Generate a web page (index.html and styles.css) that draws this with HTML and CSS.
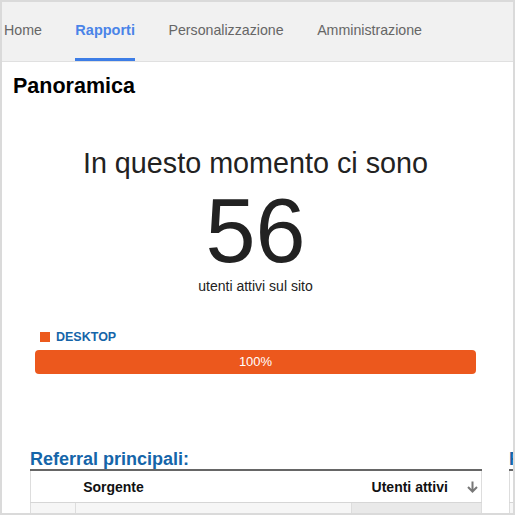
FILE: index.html
```html
<!DOCTYPE html>
<html lang="it">
<head>
<meta charset="utf-8">
<title>Panoramica</title>
<link rel="stylesheet" href="styles.css">
</head>
<body>
<div class="frame">
  <nav class="tabs">
    <a class="tab">Home</a>
    <a class="tab active">Rapporti</a>
    <a class="tab">Personalizzazione</a>
    <a class="tab">Amministrazione</a>
  </nav>
  <main class="page">
    <h1 class="title">Panoramica</h1>
    <section class="summary">
      <div class="lead">In questo momento ci sono</div>
      <div class="count">56</div>
      <div class="sub">utenti attivi sul sito</div>
      <div class="legend"><span class="swatch"></span><span class="legend-label">DESKTOP</span></div>
      <div class="bar"><div class="bar-fill" style="width:100%">100%</div></div>
    </section>
    <section class="panels">
      <div class="panel">
        <h2 class="panel-title">Referral principali:</h2>
        <table class="grid">
          <thead>
            <tr><th class="c1"></th><th class="c2">Sorgente</th><th class="c3"><span>Utenti attivi</span><svg class="sort" width="11" height="12" viewBox="0 0 11 12"><path d="M5.5 0.5V10.5M1 6L5.5 10.5L10 6" fill="none" stroke="#777" stroke-width="2"/></svg></th></tr>
          </thead>
          <tbody>
            <tr><td class="c1"></td><td class="c2"></td><td class="c3"></td></tr>
          </tbody>
        </table>
      </div>
      <div class="panel">
        <h2 class="panel-title">Pagine attive principali:</h2>
        <table class="grid">
          <thead>
            <tr><th class="c1"></th><th class="c2">Pagina attiva</th><th class="c3"><span>Utenti attivi</span></th></tr>
          </thead>
          <tbody>
            <tr><td class="c1"></td><td class="c2"></td><td class="c3"></td></tr>
          </tbody>
        </table>
      </div>
    </section>
  </main>
</div>
</body>
</html>
```
FILE: styles.css
```css
html, body {
  margin: 0;
  padding: 0;
  background: #ffffff;
}
body {
  font-family: "Liberation Sans", Arial, sans-serif;
  color: #222222;
}
.frame {
  width: 515px;
  height: 515px;
  box-sizing: border-box;
  border: 2px solid #dadada;
  overflow: hidden;
  background: #ffffff;
}
.tabs {
  display: flex;
  gap: 33.5px;
  height: 59px;
  padding-left: 2px;
  background: #f1f1f1;
  border-bottom: 1px solid #e0e0e0;
}
.tab {
  display: block;
  height: 59px;
  box-sizing: border-box;
  line-height: 56px;
  font-size: 14.2px;
  color: #666666;
  border-bottom: 3px solid transparent;
  white-space: nowrap;
}
.tab.active {
  color: #4a84e8;
  font-size: 14.5px;
  font-weight: bold;
  border-bottom-color: #3d7de6;
}
.page {
  padding-top: 12px;
}
.title {
  margin: 0 0 0 11px;
  font-size: 21.5px;
  line-height: 24px;
  font-weight: bold;
  color: #000000;
}
.summary {
  margin: 49px 37px 0 33px;
  text-align: center;
}
.lead {
  font-size: 28.75px;
  line-height: 32px;
  color: #222222;
}
.count {
  margin-top: 12px;
  font-size: 90px;
  line-height: 80px;
  color: #222222;
}
.sub {
  margin-top: 7px;
  font-size: 14px;
  line-height: 16px;
  color: #222222;
}
.legend {
  display: flex;
  align-items: center;
  gap: 6px;
  margin-top: 36px;
  padding-left: 5px;
  height: 14px;
}
.swatch {
  width: 10px;
  height: 10px;
  background: #ec5a1d;
}
.legend-label {
  font-size: 12.5px;
  line-height: 14px;
  font-weight: bold;
  color: #1565a9;
}
.bar {
  margin-top: 6px;
  height: 24px;
  border-radius: 4px;
  overflow: hidden;
  background: #eeeeee;
}
.bar-fill {
  height: 24px;
  line-height: 24px;
  background: #ec581d;
  color: #ffffff;
  font-size: 13px;
}
.panels {
  display: flex;
  gap: 27px;
  margin: 75px 0 0 28px;
}
.panel {
  flex: 0 0 452px;
}
.panel-title {
  margin: 0;
  font-size: 18px;
  line-height: 20px;
  font-weight: bold;
  color: #1565a9;
  border-bottom: 2px solid #666666;
  white-space: nowrap;
}
.grid {
  width: 452px;
  border-collapse: collapse;
  border-left: 1px solid #dddddd;
  border-right: 1px solid #dddddd;
}
.grid th {
  height: 31px;
  padding: 0;
  font-size: 14px;
  font-weight: bold;
  color: #111111;
  text-align: left;
  border-bottom: 1px solid #d6d6d6;
  background: #ffffff;
}
.grid th.c2 {
  padding-left: 8px;
}
.grid th.c3 {
  white-space: nowrap;
}
.grid th.c3 span {
  margin-left: 20px;
}
.sort {
  margin-left: 19px;
  vertical-align: -1px;
}
.grid td {
  height: 20px;
  padding: 0;
  background: #f6f6f6;
}
.grid td.c2 {
  border-left: 1px solid #dddddd;
}
.grid td.c3 {
  border-left: 1px solid #dddddd;
  background: #e9e9e9;
}
.c1 {
  width: 45px;
}
.c2 {
  width: 275px;
}
.c3 {
  width: 129px;
}
```
